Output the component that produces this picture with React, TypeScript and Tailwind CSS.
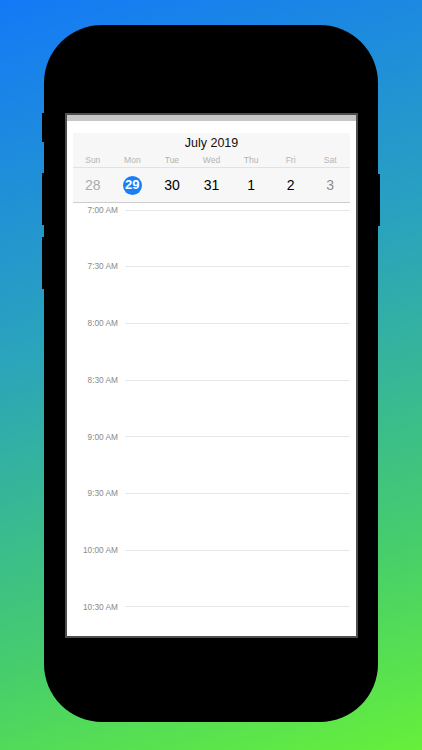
const days = [
  { label: "Sun", date: "28", tone: "text-[#acacac]" },
  { label: "Mon", date: "29", selected: true },
  { label: "Tue", date: "30", tone: "text-black" },
  { label: "Wed", date: "31", tone: "text-black" },
  { label: "Thu", date: "1", tone: "text-black" },
  { label: "Fri", date: "2", tone: "text-black" },
  { label: "Sat", date: "3", tone: "text-[#8e8e8e]" },
];

const times = ["7:00 AM", "7:30 AM", "8:00 AM", "8:30 AM", "9:00 AM", "9:30 AM", "10:00 AM", "10:30 AM"];

const WeekHeader = () => {
  return (
    <div className="mx-[6px] mt-[12px] bg-[#f7f7f7] border-b border-[#cdcdcd]">
      <div className="h-[20px] flex items-center justify-center text-[12.5px] text-[#111]">July 2019</div>
      <div className="grid grid-cols-7 h-[15px] border-b border-[#e2e2e2]">
        {days.map((d) => (
          <div key={d.label} className="flex items-center justify-center text-[8.5px] text-[#b4b4b4]">
            {d.label}
          </div>
        ))}
      </div>
      <div className="grid grid-cols-7 h-[34px]">
        {days.map((d) => (
          <div key={d.label} className="flex items-center justify-center">
            {d.selected ? (
              <span className="w-[19px] h-[19px] rounded-full bg-[#1a7ff6] text-white font-bold text-[13px] flex items-center justify-center">
                {d.date}
              </span>
            ) : (
              <span className={`text-[14px] ${d.tone}`}>{d.date}</span>
            )}
          </div>
        ))}
      </div>
    </div>
  );
};

const Timeline = () => {
  return (
    <div className="mt-[1px] flex flex-col gap-[44.7px]">
      {times.map((t) => (
        <div key={t} className="h-[12px] flex items-center">
          <span className="w-[51px] text-right text-[8.3px] text-[#8a8a8a]">{t}</span>
          <div className="flex-1 h-px bg-[#e6e6e6] ml-[7px] mr-[6px]" />
        </div>
      ))}
    </div>
  );
};

export default function App() {
  return (
    <div
      className="w-[422px] h-[750px] overflow-hidden pt-[25px] pl-[44px] bg-[linear-gradient(162deg,#1479f7_0%,#2aa3bd_40%,#45cc6e_75%,#66f03a_100%)]"
      style={{ fontFamily: '"Liberation Sans", Arial, sans-serif' }}
    >
      <div className="relative w-[334px] h-[697px] rounded-[58px] bg-black pt-[88px] pl-[21px]">
        <div className="absolute left-[-2px] top-[88px] w-[2px] h-[29px] bg-black" />
        <div className="absolute left-[-2px] top-[148px] w-[2px] h-[52px] bg-black" />
        <div className="absolute left-[-2px] top-[212px] w-[2px] h-[52px] bg-black" />
        <div className="absolute right-[-2px] top-[149px] w-[2px] h-[52px] bg-black" />

        <div className="w-[293px] h-[525px] border-2 border-[#4e4e4e] bg-white overflow-hidden">
          <div className="h-[6px] bg-[#c6c6c6]" />
          <WeekHeader />
          <Timeline />
        </div>
      </div>
    </div>
  );
}
